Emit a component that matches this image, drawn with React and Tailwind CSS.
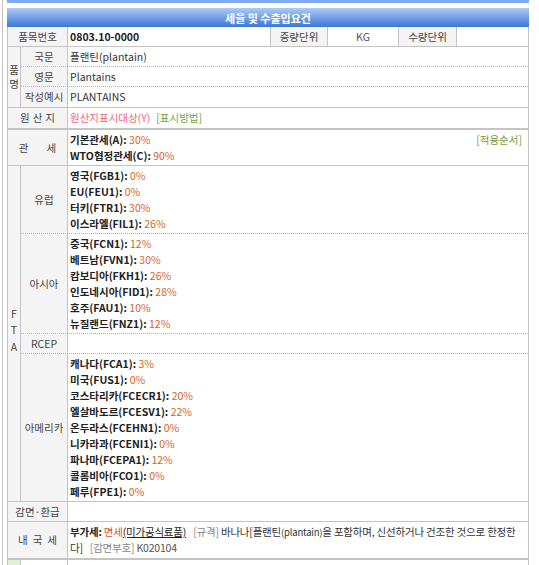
import React from "react";

const B = "border-[#c4c4c4]";
const LABEL = "bg-[#f4f4f4] text-[#444] flex items-center justify-center";
const DOT = "border-b border-dotted border-[#b0b0b0]";

const names = [
  { k: "국문", v: "플랜틴(plantain)" },
  { k: "영문", v: "Plantains" },
  { k: "작성예시", v: "PLANTAINS" },
];

const fta = [
  {
    name: "유럽",
    items: [
      ["영국(FGB1)", "0%"],
      ["EU(FEU1)", "0%"],
      ["터키(FTR1)", "30%"],
      ["이스라엘(FIL1)", "26%"],
    ],
  },
  {
    name: "아시아",
    items: [
      ["중국(FCN1)", "12%"],
      ["베트남(FVN1)", "30%"],
      ["캄보디아(FKH1)", "26%"],
      ["인도네시아(FID1)", "28%"],
      ["호주(FAU1)", "10%"],
      ["뉴질랜드(FNZ1)", "12%"],
    ],
  },
  { name: "RCEP", items: [] },
  {
    name: "아메리카",
    items: [
      ["캐나다(FCA1)", "3%"],
      ["미국(FUS1)", "0%"],
      ["코스타리카(FCECR1)", "20%"],
      ["엘살바도르(FCESV1)", "22%"],
      ["온두라스(FCEHN1)", "0%"],
      ["니카라과(FCENI1)", "0%"],
      ["파나마(FCEPA1)", "12%"],
      ["콜롬비아(FCO1)", "0%"],
      ["페루(FPE1)", "0%"],
    ],
  },
];

function Rate({ label, value }) {
  return (
    <div className="whitespace-nowrap">
      <span className="font-bold text-[#222]">{label}:</span>{" "}
      <span className="text-[#d9641c]">{value}</span>
    </div>
  );
}

export default function App() {
  return (
    <div className="min-h-screen bg-white pl-[2px] font-['Noto_Sans_CJK_KR',sans-serif] text-[10.5px] leading-[16px] text-[#333]">
      <div className={`min-h-screen border-l ${B} pl-[4px]`}>
        <div className="w-[522px]">
          <div className="h-[3px] bg-[#7eaaf6]" />
          <div className="mt-[5px] flex h-[19px] items-center justify-center bg-linear-to-b from-[#adcaf4] to-[#3a77d8] text-[11px] font-bold text-white">
            세율 및 수출입요건
          </div>

          <div className={`border-x ${B}`}>
            {/* 품목번호 */}
            <div className={`flex h-[20px] border-b ${B}`}>
              <div className={`${LABEL} w-[60px] border-r ${B}`}>품목번호</div>
              <div className={`flex w-[203px] items-center border-r ${B} pl-[2px] font-bold text-[#222]`}>
                0803.10-0000
              </div>
              <div className={`${LABEL} w-[57px] border-r ${B}`}>중량단위</div>
              <div className={`flex w-[71px] items-center justify-center border-r ${B} text-[#555]`}>KG</div>
              <div className={`${LABEL} w-[58px] border-r ${B}`}>수량단위</div>
              <div className="flex-1" />
            </div>

            {/* 품명 */}
            <div className={`flex border-b ${B}`}>
              <div className={`${LABEL} w-[13px] flex-col border-r ${B} leading-[14px]`}>
                <span>품</span>
                <span>명</span>
              </div>
              <div className="flex flex-1 flex-col">
                {names.map((r, i) => (
                  <div key={r.k} className={`flex h-[20px] ${i < names.length - 1 ? DOT : ""}`}>
                    <div className={`${LABEL} w-[47px] border-r ${B}`}>{r.k}</div>
                    <div className="flex flex-1 items-center pl-[2px]">{r.v}</div>
                  </div>
                ))}
              </div>
            </div>

            {/* 원산지 */}
            <div className={`flex h-[22px] border-b-2 ${B}`}>
              <div className={`${LABEL} w-[60px] gap-[3px] border-r ${B}`}>
                <span>원</span>
                <span>산</span>
                <span>지</span>
              </div>
              <div className="flex flex-1 items-center gap-[6px] pl-[2px]">
                <span className="text-[#f0687a]">원산지표시대상(Y)</span>
                <span className="text-[#6fa23a]">[표시방법]</span>
              </div>
            </div>

            {/* 관세 */}
            <div className={`flex border-b ${B}`}>
              <div className={`${LABEL} w-[60px] gap-[18px] border-r ${B}`}>
                <span>관</span>
                <span>세</span>
              </div>
              <div className="flex flex-1 justify-between pb-[1px] pl-[2px] pr-[6px] pt-[2px]">
                <div>
                  <Rate label="기본관세(A)" value="30%" />
                  <Rate label="WTO협정관세(C)" value="90%" />
                </div>
                <span className="text-[#7a9a30]">[적용순서]</span>
              </div>
            </div>

            {/* FTA */}
            <div className={`flex border-b ${B}`}>
              <div className={`${LABEL} w-[13px] flex-col border-r ${B} pb-[6px] leading-[16.5px]`}>
                <span>F</span>
                <span>T</span>
                <span>A</span>
              </div>
              <div className="flex flex-1 flex-col">
                {fta.map((g, i) => (
                  <div
                    key={g.name}
                    className={`flex ${g.items.length ? "" : "h-[20px]"} ${i < fta.length - 1 ? DOT : ""}`}
                  >
                    <div className={`${LABEL} w-[47px] border-r ${B}`}>{g.name}</div>
                    <div className="flex-1 pb-[1px] pl-[2px] pt-[2px]">
                      {g.items.map(([k, v]) => (
                        <Rate key={k} label={k} value={v} />
                      ))}
                    </div>
                  </div>
                ))}
              </div>
            </div>

            {/* 감면환급 */}
            <div className={`flex h-[20px] border-b ${B}`}>
              <div className={`${LABEL} w-[60px] border-r ${B}`}>감면·환급</div>
              <div className="flex-1" />
            </div>

            {/* 내국세 */}
            <div className={`flex border-b-2 ${B}`}>
              <div className={`${LABEL} w-[60px] gap-[5px] border-r ${B}`}>
                <span>내</span>
                <span>국</span>
                <span>세</span>
              </div>
              <div className="flex-1 overflow-hidden pb-[2px] pl-[2px] pr-[2px] pt-[2px] tracking-[-0.2px]">
                <div className="whitespace-nowrap">
                  <span className="font-bold text-[#222]">부가세:</span>{" "}
                  <span className="text-[#e0561a]">면세</span>
                  <span className="text-[#222] underline">(미가공식료품)</span>
                  <span className="ml-[7px] text-[#888]">[규격]</span>{" "}
                  <span className="text-[#333]">
                    바나나[플랜틴<span className="text-[9.5px]">(plantain)</span>을 포함하며, 신선하거나 건조한 것으로 한정한
                  </span>
                </div>
                <div className="whitespace-nowrap">
                  <span className="text-[#333]">다]</span>
                  <span className="ml-[7px] text-[#888]">[감면부호]</span>{" "}
                  <span className="text-[#555]">K020104</span>
                </div>
              </div>
            </div>

            {/* next row */}
            <div className="flex h-[20px]">
              <div className={`w-[13px] border-r ${B} bg-[#e3efd4]`} />
              <div className={`w-[47px] border-r ${B}`} />
              <div className="flex-1" />
            </div>
          </div>
        </div>
      </div>
    </div>
  );
}
